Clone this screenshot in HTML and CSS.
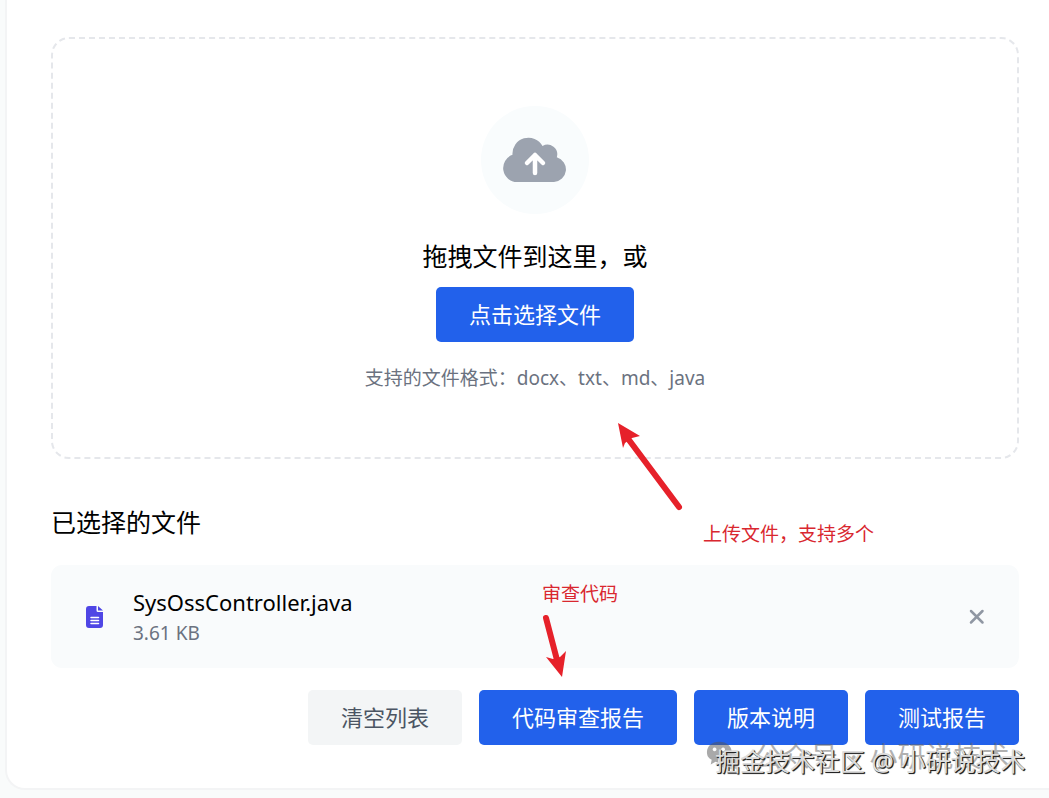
FILE: index.html
```html
<!DOCTYPE html>
<html lang="zh-CN">
<head>
<meta charset="utf-8">
<title>文件上传</title>
<link rel="stylesheet" href="styles.css">
</head>
<body>
<main class="panel">
  <section class="dropzone">
    <div class="cloud">
      <svg width="64" height="46" viewBox="0 0 64 46" aria-hidden="true">
        <path fill="#9ca3af" d="M14 45a14 14 0 0 1-4.500-27.200A16 16 0 0 1 39.500 9a9.800 9.800 0 0 1 14.300 11.300A12.600 12.600 0 0 1 51 45Z"/>
        <path fill="none" stroke="#fff" stroke-width="4.500" stroke-linecap="round" stroke-linejoin="round" d="M32 36V18M24 26l8-8 8 8"/>
      </svg>
    </div>
    <p class="lead">拖拽文件到这里，或</p>
    <button class="btn primary" type="button">点击选择文件</button>
    <p class="hint">支持的文件格式：docx、txt、md、java</p>
  </section>

  <h2 class="heading">已选择的文件</h2>
  <div class="file">
    <svg class="doc" width="18" height="24" viewBox="0 0 18 24" aria-hidden="true">
      <path fill="#4f46e5" d="M3 1h7.500v4.500q0 1.500 1.500 1.500H17v13q0 3-3 3H3q-3 0-3-3V4q0-3 3-3ZM12 1l5 4.500h-5Z"/>
      <path stroke="#fff" stroke-width="1.500" stroke-linecap="round" d="M5 12.500h7.500M5 15.500h7.500M5 18.500h7.500"/>
    </svg>
    <div class="info">
      <span class="name">SysOssController.java</span>
      <span class="size">3.61 KB</span>
    </div>
    <button class="remove" type="button" aria-label="移除文件">
      <svg width="16" height="16" viewBox="0 0 16 16" aria-hidden="true"><path stroke="#9097a3" stroke-width="2.500" stroke-linecap="round" d="m2 2 11.500 11.500M13.500 2 2 13.500"/></svg>
    </button>
  </div>
  <div class="actions">
    <button class="btn muted" type="button">清空列表</button>
    <button class="btn primary" type="button">代码审查报告</button>
    <button class="btn primary" type="button">版本说明</button>
    <button class="btn primary" type="button">测试报告</button>
  </div>
</main>

<svg class="arrow arrow-upload" width="70" height="92" viewBox="0 0 70 92" aria-hidden="true">
  <path stroke="#e6212a" stroke-width="6" stroke-linecap="round" d="M14 20 64 87"/>
  <path fill="#e6212a" d="m3 3 22 13-8 2-7 5-2 5Z"/>
</svg>
<p class="note note-upload">上传文件，支持多个</p>
<svg class="arrow arrow-review" width="30" height="66" viewBox="0 0 30 66" aria-hidden="true">
  <path stroke="#e6212a" stroke-width="6" stroke-linecap="round" d="m6 6 11 42"/>
  <path fill="#e6212a" d="m6 45 7 2 7-2 6-6-4 26Z"/>
</svg>
<p class="note note-review">审查代码</p>
<div class="mark mark-back">
  <svg width="36" height="32" viewBox="0 0 38 32" aria-hidden="true">
    <path fill="#555" fill-rule="evenodd" d="M14 1c8 0 13 5 13 10h-2c-7 0-12 5-12 10v2l-3-1-5 3 1-5C2 18 1 15 1 12 1 6 6 1 14 1ZM9 7a2 2 0 1 0 .1 0ZM18 7a2 2 0 1 0 .1 0Z"/>
    <path fill="#999" fill-rule="evenodd" d="M25 12c6 0 11 4 11 9 0 3-1 5-3 6l1 4-4-2c-10 3-16-2-16-8 0-5 5-9 11-9ZM21 17a1.500 1.500 0 1 0 .1 0ZM29 17a1.500 1.500 0 1 0 .1 0Z"/>
  </svg>
  <span>公众号</span>
  <span>·</span>
  <span>小研说技术</span>
</div>
<div class="mark mark-front">掘金技术社区 @ 小研说技术</div>
</body>
</html>
```
FILE: styles.css
```css
* { box-sizing: border-box; }
body {
  position: relative;
  margin: 0;
  min-height: 100vh;
  padding: 0 0 8px 5px;
  background: #f9fbfb;
  color: #000;
  font-family: "Noto Sans", "Noto Sans CJK SC", sans-serif;
  overflow-x: hidden;
}
p, h2 { margin: 0; }
.panel {
  padding: 37px 30px 43px 44px;
  background: #fff;
  border: solid #f3f4f5;
  border-width: 0 0 2px 2px;
  border-bottom-left-radius: 20px;
}
.dropzone {
  display: flex;
  flex-direction: column;
  align-items: center;
  padding: 67px 20px 64px;
  border: 2px dashed #e5e7eb;
  border-radius: 18px;
}
.cloud {
  display: flex;
  align-items: center;
  justify-content: center;
  width: 108px;
  height: 108px;
  border-radius: 50%;
  background: #f9fcfd;
}
.lead {
  margin: 24px 0 12px;
  font-size: 25px;
  line-height: 37px;
}
.btn {
  height: 55px;
  padding: 0 33px;
  border: 0;
  border-radius: 5px;
  font: 22px/33px "Noto Sans", "Noto Sans CJK SC", sans-serif;
  cursor: pointer;
}
.primary { background: #2261eb; color: #fff; }
.muted { background: #f3f5f6; color: #4b5563; }
.hint {
  margin-top: 22px;
  color: #6b7280;
  font-size: 19px;
  line-height: 29px;
}
.heading {
  margin: 44px 0 24px;
  font-size: 25px;
  font-weight: 400;
  line-height: 38px;
}
.file {
  display: flex;
  align-items: center;
  min-height: 103px;
  padding: 0 34px 0 35px;
  border-radius: 11px;
  background: #f9fbfc;
}
.info {
  display: flex;
  flex-direction: column;
  flex: 1;
  margin-left: 29px;
}
.name { font-size: 22px; line-height: 33px; }
.size { color: #6b7280; font-size: 19px; line-height: 28px; }
.remove {
  display: flex;
  padding: 0;
  border: 0;
  background: none;
  cursor: pointer;
}
.actions {
  display: flex;
  justify-content: flex-end;
  gap: 17px;
  margin-top: 22px;
}
.arrow, .note, .mark { position: absolute; pointer-events: none; }
.arrow { fill: none; }
.arrow-upload { left: 615px; top: 420px; }
.arrow-review { left: 540px; top: 612px; }
.note { color: #d9272f; font-size: 19px; line-height: 28px; white-space: nowrap; }
.note-upload { left: 703px; top: 520px; }
.note-review { left: 542px; top: 580px; }
.mark { white-space: nowrap; }
.mark-back {
  display: flex;
  align-items: center;
  gap: 12px;
  left: 706px;
  top: 736px;
  color: #666;
  font-size: 28px;
  line-height: 40px;
  opacity: 0.5;
}
.mark-front {
  left: 715px;
  top: 743px;
  color: #ddd;
  font-size: 25px;
  line-height: 37px;
  text-shadow: 1px 1px 1px #222, 1px 1px 0 #333;
}
```
